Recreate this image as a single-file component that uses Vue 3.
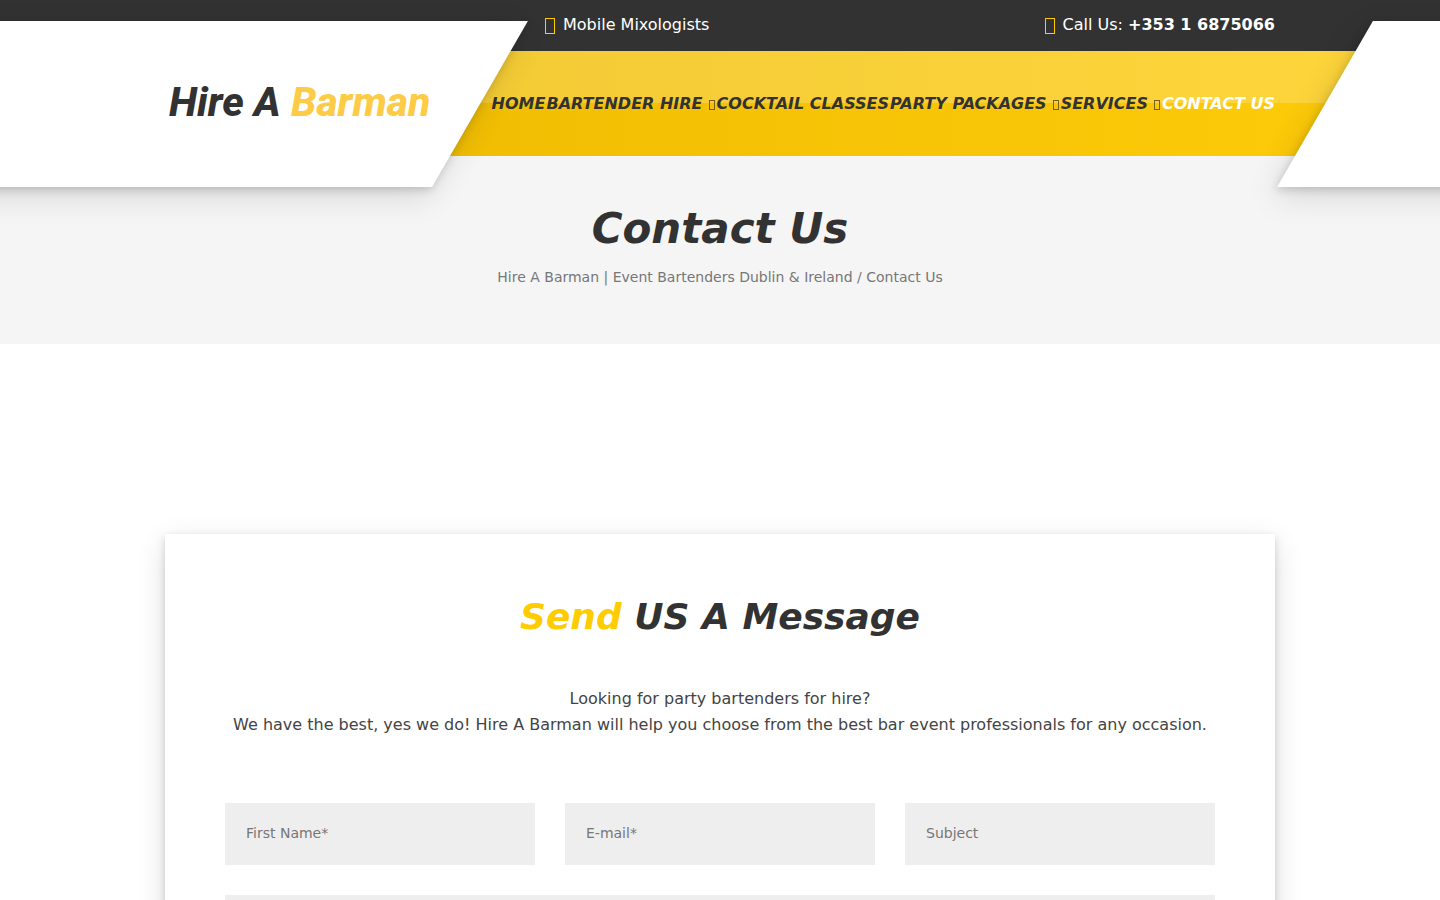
<script setup>
import { ref } from 'vue'

const menu = [
  { label: 'Home' },
  { label: 'Bartender Hire', children: true },
  { label: 'Cocktail Classes' },
  { label: 'Party Packages', children: true },
  { label: 'Services', children: true },
  { label: 'Contact Us', active: true }
]

const fields = [
  { id: 'first-name', label: 'First Name*', type: 'text' },
  { id: 'email', label: 'E-mail*', type: 'email' },
  { id: 'subject', label: 'Subject', type: 'text' }
]

const form = ref({ 'first-name': '', email: '', subject: '', message: '' })
</script>

<template>
  <div class="page">
    <header class="header">
      <div class="topbar">
        <div class="container topbar-inner">
          <span class="info"><i class="icon"></i>Mobile Mixologists</span>
          <span class="info"><i class="icon"></i><span>Call Us: <a href="#">+353 1 6875066</a></span></span>
        </div>
      </div>
      <div class="navbar">
        <div class="container">
          <nav class="menu">
            <a
              v-for="item in menu"
              :key="item.label"
              href="#"
              class="menu-link"
              :class="{ active: item.active }"
            >{{ item.label }}<i v-if="item.children" class="caret"></i></a>
          </nav>
        </div>
      </div>
      <div class="panel panel-left"></div>
      <div class="panel panel-right"></div>
      <div class="brand">
        <div class="container">
          <a href="#" class="logo">Hire A <span>Barman</span></a>
        </div>
      </div>
    </header>

    <section class="page-title">
      <h1>Contact Us</h1>
      <p class="breadcrumb"><a href="#">Hire A Barman | Event Bartenders Dublin &amp; Ireland</a> / Contact Us</p>
    </section>

    <main class="container content">
      <section class="card">
        <h2><span>Send</span> US A Message</h2>
        <p class="intro">
          Looking for party bartenders for hire?<br>
          We have the best, yes we do! Hire A Barman will help you choose from the best bar event professionals for any occasion.
        </p>
        <form class="form" @submit.prevent>
          <input
            v-for="field in fields"
            :id="field.id"
            :key="field.id"
            v-model="form[field.id]"
            :type="field.type"
            :placeholder="field.label"
            :aria-label="field.label"
          >
          <textarea id="message" v-model="form.message" aria-label="Message"></textarea>
        </form>
      </section>
    </main>
  </div>
</template>

<style>
body {
  margin: 0;
  background: #fff;
}
</style>

<style scoped>
.page {
  font-family: "DejaVu Sans", sans-serif;
  font-size: 16px;
  line-height: 26px;
  color: #444;
  overflow-x: clip;
}

.page a {
  color: inherit;
  text-decoration: none;
}

.container {
  box-sizing: border-box;
  width: 100%;
  max-width: 1110px;
  margin: 0 auto;
}

.header {
  position: relative;
  z-index: 1;
}

.topbar {
  background: #323232;
  color: #fff;
}

.topbar-inner {
  display: flex;
  justify-content: space-between;
  height: 51px;
  padding-left: 380px;
  padding-top: 12px;
}

.info {
  display: flex;
  align-items: flex-start;
  gap: 8px;
}

.info a {
  font-weight: bold;
}

.icon {
  box-sizing: border-box;
  width: 10px;
  height: 16px;
  margin-top: 6px;
  border: 1px solid #fc0;
}

.navbar {
  background:
    linear-gradient(rgba(255, 255, 255, 0.2) 50%, transparent 50%),
    linear-gradient(90deg, #eab700, #ffcc0a);
}

.menu {
  display: flex;
  justify-content: flex-end;
  gap: 1px;
  line-height: 105px;
}

.menu-link {
  font-weight: bold;
  font-style: italic;
  text-transform: uppercase;
  white-space: nowrap;
}

.page .menu-link {
  color: #323232;
}

.page .menu-link.active {
  color: #fff;
}

.caret {
  display: inline-block;
  box-sizing: border-box;
  width: 6px;
  height: 10px;
  margin: 0 1px 0 6px;
  border: 1px solid #7a5f10;
  vertical-align: -1px;
}

.panel {
  position: absolute;
  top: 21px;
  height: 166px;
  background: #fff;
  box-shadow:
    0 3px 8px rgba(0, 0, 0, 0.16),
    0 10px 30px rgba(0, 0, 0, 0.12);
  transform: skewX(-30deg);
}

.panel-left {
  left: -120px;
  right: calc(50% + 240px);
}

.panel-right {
  left: calc(50% + 605px);
  right: -120px;
}

.brand {
  position: absolute;
  top: 76px;
  left: 0;
  right: 0;
  pointer-events: none;
}

.logo {
  padding-left: 4px;
  font-family: Roboto, sans-serif;
  font-size: 41px;
  font-weight: 800;
  font-style: italic;
  line-height: 52px;
  pointer-events: auto;
}

.page .logo {
  color: #323232;
}

.logo span {
  color: #fdcb46;
}

.page-title {
  padding: 47px 20px 54px;
  background: #f5f5f5;
  text-align: center;
}

.page-title h1 {
  margin: 0;
  font-size: 42px;
  font-style: italic;
  line-height: 52px;
  color: #323232;
}

.breadcrumb {
  margin: 9px 0 0;
  font-size: 14px;
  color: #777;
}

.content {
  padding-top: 190px;
}

.card {
  padding: 60px;
  background: #fff;
  box-shadow:
    0 3px 8px rgba(0, 0, 0, 0.16),
    0 10px 30px rgba(0, 0, 0, 0.12);
  text-align: center;
}

.card h2 {
  margin: 0;
  font-size: 36px;
  font-style: italic;
  line-height: 46px;
  color: #323232;
}

.card h2 span {
  color: #fc0;
}

.intro {
  margin: 46px 0 65px;
}

.form {
  display: grid;
  grid-template-columns: repeat(3, 1fr);
  gap: 30px;
}

.form input,
.form textarea {
  box-sizing: border-box;
  width: 100%;
  height: 62px;
  margin: 0;
  padding: 0 21px 2px;
  border: 0;
  border-radius: 0;
  background: #eee;
  font: inherit;
  font-size: 14px;
  color: #444;
}

.form textarea {
  grid-column: 1 / -1;
  height: 200px;
  padding: 18px 21px;
  resize: vertical;
}

.form input::placeholder {
  color: #777;
  opacity: 1;
}
</style>
